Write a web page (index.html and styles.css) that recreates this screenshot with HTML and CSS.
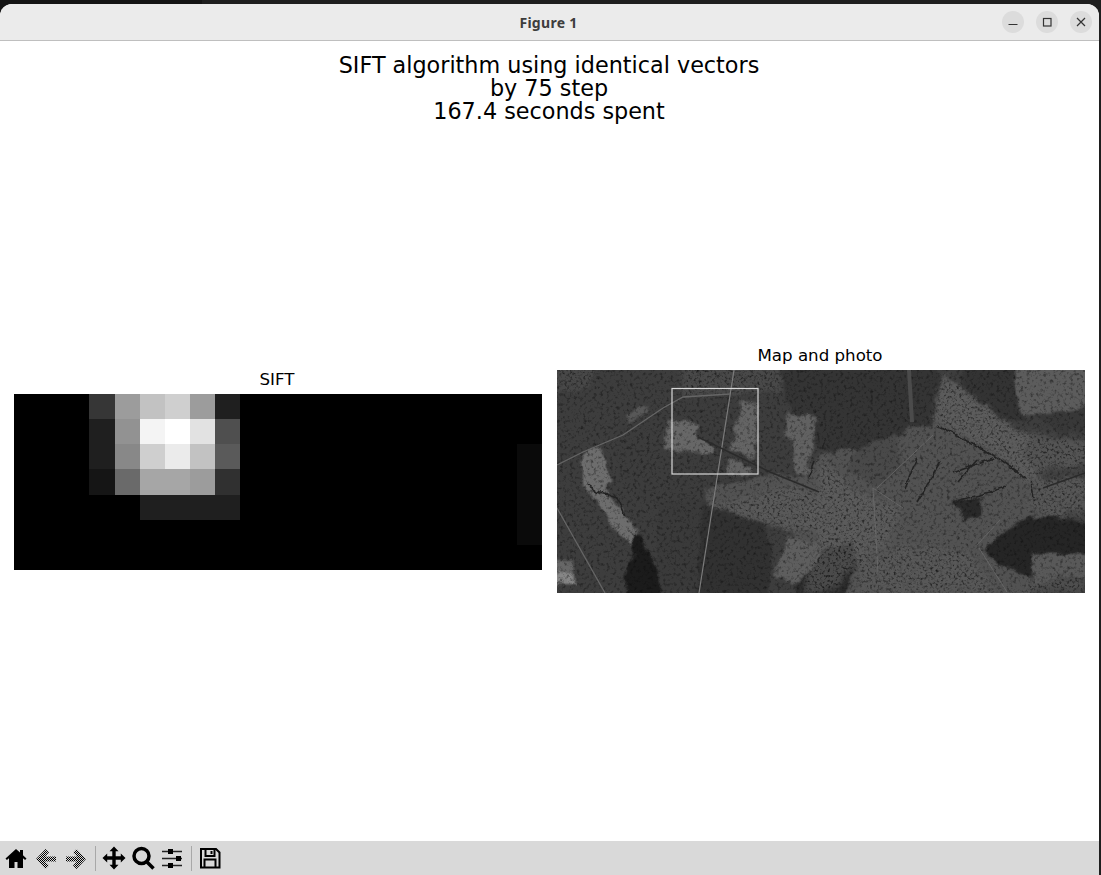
FILE: index.html
```html
<!DOCTYPE html>
<html lang="en">
<head>
<meta charset="utf-8">
<title>Figure 1</title>
<link rel="stylesheet" href="styles.css">
</head>
<body>
<main class="window">
  <header class="titlebar">
    <span></span>
    <h1 class="window-title">Figure 1</h1>
    <div class="controls">
      <button class="control" aria-label="Minimize"><svg viewBox="0 0 22 22" class="control-icon"><path d="M6.500 13.500h9"/></svg></button>
      <button class="control" aria-label="Maximize"><svg viewBox="0 0 22 22" class="control-icon"><rect x="7.500" y="7.500" width="7.500" height="7.500"/></svg></button>
      <button class="control" aria-label="Close"><svg viewBox="0 0 22 22" class="control-icon"><path d="M7 7l8 8M15 7l-8 8"/></svg></button>
    </div>
  </header>

  <section class="figure">
    <div class="suptitle">
      <div>SIFT algorithm using identical vectors</div>
      <div>by 75 step</div>
      <div>167.4 seconds spent</div>
    </div>
    <div class="axes-row">
      <figure class="axes">
        <figcaption class="axes-title">SIFT</figcaption>
        <svg class="heatmap" viewBox="0 0 21 7" preserveAspectRatio="none" shape-rendering="crispEdges">
          <rect width="21" height="7" fill="#000"/>
          <rect x="3" y="0" width="1" height="1" fill="#363636"/><rect x="4" y="0" width="1" height="1" fill="#9c9c9c"/><rect x="5" y="0" width="1" height="1" fill="#c2c2c2"/><rect x="6" y="0" width="1" height="1" fill="#cfcfcf"/><rect x="7" y="0" width="1" height="1" fill="#9c9c9c"/><rect x="8" y="0" width="1" height="1" fill="#1f1f1f"/>
          <rect x="3" y="1" width="1" height="1" fill="#1f1f1f"/><rect x="4" y="1" width="1" height="1" fill="#929292"/><rect x="5" y="1" width="1" height="1" fill="#f4f4f4"/><rect x="6" y="1" width="1" height="1" fill="#ffffff"/><rect x="7" y="1" width="1" height="1" fill="#e2e2e2"/><rect x="8" y="1" width="1" height="1" fill="#4f4f4f"/>
          <rect x="3" y="2" width="1" height="1" fill="#1f1f1f"/><rect x="4" y="2" width="1" height="1" fill="#888888"/><rect x="5" y="2" width="1" height="1" fill="#cfcfcf"/><rect x="6" y="2" width="1" height="1" fill="#ebebeb"/><rect x="7" y="2" width="1" height="1" fill="#c2c2c2"/><rect x="8" y="2" width="1" height="1" fill="#5a5a5a"/>
          <rect x="3" y="3" width="1" height="1" fill="#151515"/><rect x="4" y="3" width="1" height="1" fill="#6a6a6a"/><rect x="5" y="3" width="1" height="1" fill="#a6a6a6"/><rect x="6" y="3" width="1" height="1" fill="#a6a6a6"/><rect x="7" y="3" width="1" height="1" fill="#9c9c9c"/><rect x="8" y="3" width="1" height="1" fill="#303030"/>
          <rect x="5" y="4" width="4" height="1" fill="#1f1f1f"/>
          <rect x="20" y="2" width="1" height="4" fill="#0a0a0a"/>
        </svg>
      </figure>
      <figure class="axes">
        <figcaption class="axes-title">Map and photo</figcaption>
        <svg class="satellite" viewBox="0 0 528 223">
          <defs>
            <filter id="terrain" filterUnits="userSpaceOnUse" x="-30" y="-30" width="588" height="283" color-interpolation-filters="sRGB">
              <feGaussianBlur in="SourceGraphic" stdDeviation="1.200" result="smooth"/>
              <feTurbulence type="fractalNoise" baseFrequency="0.08" numOctaves="4" seed="4" result="warp"/>
              <feDisplacementMap in="smooth" in2="warp" scale="9" xChannelSelector="R" yChannelSelector="G" result="shape"/>
              <feTurbulence type="fractalNoise" baseFrequency="0.3" numOctaves="4" seed="9"/>
              <feColorMatrix values="1.300 0 0 0 .35  1.300 0 0 0 .35  1.300 0 0 0 .35  0 0 0 0 1" result="grain"/>
              <feComposite in="shape" in2="grain" operator="arithmetic" k1="0.86" k2="0" k3="0" k4="0"/>
              <feGaussianBlur stdDeviation="0.4"/>
            </filter>
            <filter id="speckle" filterUnits="userSpaceOnUse" x="-30" y="-30" width="588" height="283" color-interpolation-filters="sRGB">
              <feGaussianBlur in="SourceGraphic" stdDeviation="3" result="smooth"/>
              <feTurbulence type="fractalNoise" baseFrequency="0.08" numOctaves="4" seed="4" result="warp"/>
              <feDisplacementMap in="smooth" in2="warp" scale="9" xChannelSelector="R" yChannelSelector="G" result="shape"/>
              <feTurbulence type="fractalNoise" baseFrequency="0.38" numOctaves="2" seed="21"/>
              <feColorMatrix values="2.600 0 0 0 -.3  2.600 0 0 0 -.3  2.600 0 0 0 -.3  0 0 0 0 1" result="grain"/>
              <feComposite in="shape" in2="grain" operator="arithmetic" k1="1" k2="0" k3="0" k4="0"/>
              <feGaussianBlur stdDeviation="0.45"/>
            </filter>
            <filter id="wiggle" filterUnits="userSpaceOnUse" x="-30" y="-30" width="588" height="283" color-interpolation-filters="sRGB">
              <feTurbulence type="fractalNoise" baseFrequency="0.1" numOctaves="3" seed="14" result="warp"/>
              <feDisplacementMap in="SourceGraphic" in2="warp" scale="6" xChannelSelector="R" yChannelSelector="G"/>
              <feGaussianBlur stdDeviation="0.55"/>
            </filter>
            <filter id="soft" filterUnits="userSpaceOnUse" x="-30" y="-30" width="588" height="283"><feGaussianBlur stdDeviation="0.5"/></filter>
          </defs>
          <g filter="url(#terrain)">
            <rect x="-30" y="-30" width="588" height="283" fill="#3e3e3e"/>
            <path fill="#484848" d="M-30-30H50L30 18-30 28Z"/>
            <path fill="#4a4a4a" d="M125-30H222L226 22 180 24 125 28Z"/>
            <path fill="#3c3c3c" d="M60 60L110 30 175 26 180 60 175 80 210 100 190 112 150 120 125 135 85 130 60 100Z"/>
            <path fill="#333333" d="M215-30H370L384 5 375 60 340 65 300 82 262 80 232 35Z"/>
            <path fill="#323232" d="M400-30H470L455 15 470 50 440 55 410 25Z"/>
            <path fill="#3a3a3a" d="M100 130L190 130 210 170 200 250 100 250Z"/>
            <path fill="#303030" d="M145 135L195 130 215 175 212 250 140 250Z"/>
            <path fill="#565656" d="M148 120L183 112 213 105 247 108 263 85 296 78 323 82 353 58 376 55 386 5 413 25 463 62 560 68 560 130 500 145 470 148 443 165 426 182 443 195 473 208 476 250 290 250 270 222 262 180 238 175 235 160 190 148 150 135Z"/>
            <path fill="#4c4c4c" d="M298 80L340 64 345 100 320 118 290 100Z"/>
            <path fill="#3e3e3e" d="M470 62L560 58 560 105 490 112 465 85Z"/>
            <path fill="#262626" d="M262 180L296 172 300 198 275 250 235 250 240 210Z"/>
            <path fill="#646464" d="M230 165L262 175 262 190 240 215 218 205Z"/>
            <path fill="#626262" d="M456 12L470-30H560V35L480 45 463 42Z"/>
            <path fill="#383838" d="M478 45L560 32 560 60 500 62Z"/>
            <path fill="#222222" d="M426 182L443 165 470 148 496 145 560 160 560 182 476 185 473 208 443 195Z"/>
            <path fill="#262626" d="M396 130L425 128 424 145 405 150Z"/>
            <path fill="#5e5e5e" d="M474 185L560 180 560 205 500 207 476 218Z"/>
            <path fill="#6f6f6f" d="M111 50L140 54 140 67 158 77 156 85 108 78Z"/>
            <path fill="#6b6b6b" d="M183 30L200 32 200 55 197 88 173 78 180 55Z"/>
            <path fill="#696969" d="M171 88L196 100 193 105 170 103Z"/>
            <path fill="#676767" d="M231 43L260 48 253 85 251 107 238 102 236 72 228 65Z"/>
            <path fill="#5d5d5d" d="M68 45L90 35 93 42 73 53Z"/>
            <path fill="#767676" d="M26 82L43 78 53 108 50 122 66 142 83 165 73 175 60 162 43 135 26 115Z"/>
            <path fill="#6e6e6e" d="M-10 190L17 190 17 204H-10Z"/>
            <path fill="#939393" d="M-10 204L17 204 17 214H-10Z"/>
            <path fill="#161616" d="M75 163L85 165 88 178 100 195 105 250 71 250 68 208 76 185Z"/>
          </g>
          <g class="speckle-layer" filter="url(#speckle)">
            <path fill="#5e5e5e" d="M200 125L235 115 262 125 262 158 235 160 200 150 165 140 150 135Z"/>
            <path fill="#626262" d="M263 85L296 120 345 138 330 175 300 195 275 222H245L262 165 240 155 262 125Z"/>
            <path fill="#646464" d="M386 5L413 25 463 62 528 70 540 95 490 100 470 112 440 85 385 55 375 50Z"/>
            <path fill="#5a5a5a" d="M476 110L528 105 528 148 490 145 470 140Z"/>
            <path fill="#5c5c5c" d="M300 195L345 175 410 180 440 222H300Z"/>
            <path fill="#5a5a5a" d="M473 208L528 205 528 223H470Z"/>
            <path fill="#4a4a4a" d="M-20-20H50L30 18-20 28Z"/>
            <path fill="#4a4a4a" d="M125-10H222L226 22 180 24 125 28Z"/>
          </g>
          <g class="map-lines" filter="url(#wiggle)">
            <path class="river" d="M30 115L40 122 60 128 68 145"/>
            <path class="river" d="M360 88L348 118"/>
            <path class="river" d="M383 92L360 132"/>
            <path class="river" d="M420 90L401 112"/>
            <path class="river" d="M436 88L396 103"/>
            <path class="river" d="M450 117L396 132"/>
            <path class="river" d="M473 112L476 128"/>
            <path class="river" d="M380 55L436 85 470 108"/>
            <path class="river" d="M258 92L252 108"/>
            <path class="river" d="M265 80L268 68"/>
          </g>
          <g class="map-lines" filter="url(#soft)">
            <path class="road-light" d="M177 0L142 223"/>
            <path class="road-mid" d="M0 95L26 82 66 65 106 38 126 27 173 24"/>
            <path class="road-mid" d="M0 138L48 223"/>
            <path class="road-dark" d="M141 67L213 102 262 122"/>
            <path class="road-wide" d="M352 0L355 52"/>
            <path class="road-faint" d="M316 118L321 202"/>
            <path class="road-faint" d="M316 118L346 138"/>
            <path class="road-faint" d="M420 175L443 150"/>
            <path class="road-faint" d="M320 118L376 65"/>
            <path class="road-faint" d="M422 178L450 222"/>
            <path class="road-dark" d="M486 118L528 103"/>
          </g>
          <rect class="match-box" x="115" y="18.500" width="86" height="85.500"/>
        </svg>
      </figure>
    </div>
  </section>

  <nav class="toolbar">
    <svg class="tool tool-home" viewBox="0 0 24 24"><path d="M12 3L1.500 12.500l1.400 1.500L5 12.300V22h5.500v-6h3v6H19v-9.700l2.100 1.700 1.400-1.500-3.500-3.200V4h-3v2.600z"/></svg>
    <svg class="tool tool-nav" viewBox="0 0 24 24"><defs><pattern id="dither" width="2" height="2" patternUnits="userSpaceOnUse"><rect width="1" height="1"/><rect x="1" y="1" width="1" height="1"/></pattern></defs><path class="dither-fill" d="M2 13L11.500 3 15 6.500 11 10.500H22V15.500H11L15 19.500 11.500 23Z"/></svg>
    <svg class="tool tool-nav" viewBox="0 0 24 24"><path class="dither-fill" d="M22 13L12.500 3 9 6.500 13 10.500H2V15.500H13L9 19.500 12.500 23Z"/></svg>
    <span class="tool-sep"></span>
    <svg class="tool tool-move" viewBox="0 0 24 24"><path d="M12 .5l4.500 4.700H13.700v5.100h5.100V7.500L23.500 12l-4.700 4.500v-2.800h-5.100v5.100h2.800L12 23.500l-4.500-4.700h2.800v-5.100H5.200v2.800L.5 12l4.700-4.500v2.800h5.100V5.200H7.500z"/></svg>
    <svg class="tool tool-zoom" viewBox="0 0 24 24"><circle cx="10.500" cy="10" r="7.500"/><path d="M15.500 15.500l7 7"/></svg>
    <svg class="tool tool-sliders" viewBox="0 0 24 24"><path d="M2 5.500h20M2 12.500h20M2 19.500h20"/><rect x="8" y="3" width="5" height="5"/><rect x="16" y="10" width="5" height="5"/><rect x="8" y="17" width="5" height="5"/></svg>
    <span class="tool-sep tool-sep-second"></span>
    <svg class="tool tool-save" viewBox="0 0 24 24"><path d="M3 3h15l3.500 3.500V21.500H3z"/><path d="M7.500 3.500v6.500h9V3.500M13.500 5v3M6.500 21v-7.500h11V21"/></svg>
  </nav>
</main>
</body>
</html>
```

FILE: styles.css
```css
* { box-sizing: border-box; }

html, body {
  margin: 0;
  height: 100%;
}

body {
  width: 1101px;
  height: 875px;
  overflow: hidden;
  background: linear-gradient(90deg, #141414 202px, #1e1e1e 202px);
}

.window {
  width: 1099px;
  height: 871px;
  margin-top: 4px;
  display: flex;
  flex-direction: column;
  background: #fff;
  border-radius: 12px 12px 0 0;
  overflow: hidden;
}

.titlebar {
  flex: none;
  height: 37px;
  display: grid;
  grid-template-columns: 1fr auto 1fr;
  align-items: center;
  background: #ebebeb;
  border-bottom: 1px solid #bfbfbf;
}

.window-title {
  margin: 1px 0 0;
  font: 700 14px/20px "Noto Sans", "Open Sans", sans-serif;
  color: #3d3d3d;
  letter-spacing: 0.3px;
  padding-right: 2px;
}

.controls {
  display: flex;
  justify-content: flex-end;
  gap: 12px;
  padding-right: 7px;
}

.control {
  width: 22px;
  height: 22px;
  padding: 0;
  border: 0;
  border-radius: 50%;
  background: #dcdcdc;
}

.control-icon {
  display: block;
  width: 22px;
  height: 22px;
  fill: none;
  stroke: #333;
  stroke-width: 1.2;
}

.figure {
  flex: 1;
  min-height: 0;
  display: flex;
  flex-direction: column;
  padding-top: 13px;
  background: #fff;
  color: #000;
  font-family: "DejaVu Sans", sans-serif;
}

.suptitle {
  flex: none;
  font-size: 22.300px;
  line-height: 23px;
  text-align: center;
  padding-right: 1px;
}

.axes-row {
  flex: 1;
  display: flex;
  align-items: center;
  gap: 15px;
  padding: 0 0 25px 14px;
}

.axes {
  margin: 0;
  width: 528px;
}

.axes-title {
  height: 20px;
  margin-bottom: 4px;
  padding-right: 2px;
  font-size: 16.670px;
  line-height: 20px;
  text-align: center;
}

.heatmap {
  display: block;
  width: 528px;
  height: 176px;
}

.satellite {
  display: block;
  width: 528px;
  height: 223px;
  background: #3e3e3e;
}

.speckle-layer { opacity: 0.6; }

.map-lines path { fill: none; }
.road-light { stroke: #7c7c7c; stroke-width: 1.2; }
.road-mid { stroke: #666; stroke-width: 1.3; }
.road-faint { stroke: #6e6e6e; stroke-width: 1; opacity: 0.7; }
.road-wide { stroke: #4c4c4c; stroke-width: 4; }
.road-dark { stroke: #2c2c2c; stroke-width: 1.6; }
.river { stroke: #232323; stroke-width: 1.6; }

.match-box {
  fill: none;
  stroke: #d8d8d8;
  stroke-width: 1.200;
}

.toolbar {
  flex: none;
  height: 34px;
  display: flex;
  align-items: center;
  padding-left: 4px;
  background: #d9d9d9;
}

.tool {
  flex: none;
  width: 24px;
  height: 24px;
  margin-right: 6px;
}

.tool-home { fill: #000; }
.dither-fill { fill: url(#dither); }

.tool-sep {
  flex: none;
  width: 1px;
  height: 25px;
  margin: 0 6px 0 1px;
  background: #a8a8a8;
}

.tool-move { margin-right: 5px; }
.tool-zoom { fill: none; stroke: #000; stroke-width: 3.500; margin-right: 5px; }
.tool-sliders { fill: #000; stroke: #222; stroke-width: 1.500; margin-right: 5px; }
.tool-sliders rect { stroke: none; }
.tool-sep-second { margin: 0 6px 0 2px; }
.tool-save { fill: none; stroke: #000; stroke-width: 2; }
```
